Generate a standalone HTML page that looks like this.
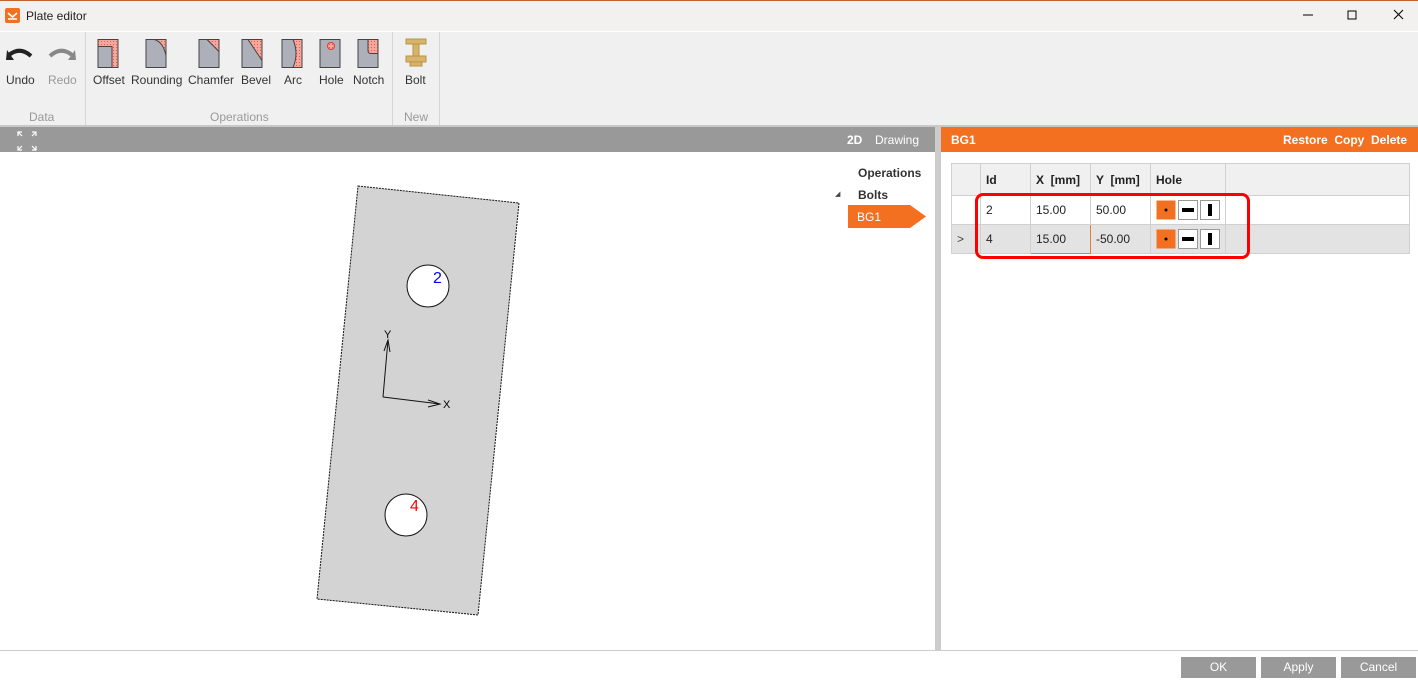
<!DOCTYPE html>
<html><head><style>
*{margin:0;padding:0;box-sizing:border-box}
body{width:1418px;height:680px;position:relative;overflow:hidden;font-family:"Liberation Sans",sans-serif;font-size:12px;background:#fff;color:#222}
.abs{position:absolute}
.tb{position:absolute;top:34px;text-align:center;font-size:12px;color:#333}
.btn{position:absolute;top:657px;height:21px;background:#999;color:#fff;text-align:center;line-height:21px;font-size:12px}
td{border:1px solid #d0d0d0;padding:0 5px;height:29px;font-size:12px}
</style></head><body>
<div class="abs" style="left:0;top:0;width:1418px;height:31px;background:#f3f1ef;border-top:1px solid #c0612e"></div>
<div class="abs" style="left:5px;top:8px;width:15px;height:15px;background:#f37021;border-radius:2px"></div>
<svg class="abs" style="left:5px;top:8px" width="15" height="15"><path d="M3 5 L7.5 9 L12 5 M3 11 H12" stroke="#fff" stroke-width="1.6" fill="none"/></svg>
<div class="abs" style="left:26px;top:9px;font-size:12px">Plate editor</div>
<svg class="abs" style="left:1290px;top:8px" width="120" height="16"><path d="M13 7h10" stroke="#000"/><path d="M58 3h8v8h-8z" stroke="#000" fill="none"/><path d="M104 2l9 9M113 2l-9 9" stroke="#000"/></svg>
<div class="abs" style="left:0;top:32px;width:1418px;height:94px;background:#f0f0f0"></div>
<div class="abs" style="left:85px;top:32px;width:1px;height:94px;background:#d5d5d5"></div>
<div class="abs" style="left:392px;top:32px;width:1px;height:94px;background:#d5d5d5"></div>
<div class="abs" style="left:439px;top:32px;width:1px;height:94px;background:#d5d5d5"></div>
<svg class="abs" style="left:6px;top:46px" width="70" height="18"><path d="M3 9 Q14 0 25 10" stroke="#222" stroke-width="4" fill="none"/><path d="M1 4 L8 14 L0 14Z" fill="#222"/><path d="M44 10 Q55 0 66 9" stroke="#888" stroke-width="4" fill="none"/><path d="M69 4 L62 14 L70 14Z" fill="#888"/></svg>
<div class="tb" style="left:6px;top:73px">Undo</div>
<div class="tb" style="left:48px;top:73px;color:#999">Redo</div>
<div class="tb" style="left:29px;top:110px;color:#999">Data</div>
<svg class="abs" style="left:95px;top:38px" width="290" height="32">
<defs><pattern id="h" width="3" height="3" patternUnits="userSpaceOnUse"><rect width="3" height="3" fill="#f6a69a"/><rect width="1" height="1" fill="#e55"/></pattern></defs>
<g stroke="#444" stroke-width="1"><rect x="3" y="1.5" width="20" height="28" fill="#adb0b8"/><path d="M3 1.5h20v28h-6v-21h-14z" fill="url(#h)"/>
<rect x="51" y="1.5" width="20" height="28" fill="#adb0b8"/><path d="M59 1.5h12v16q-3-14-12-16z" fill="url(#h)"/>
<rect x="104" y="1.5" width="20" height="28" fill="#adb0b8"/><path d="M112 1.5h12v12z" fill="url(#h)"/>
<rect x="147" y="1.5" width="20" height="28" fill="#adb0b8"/><path d="M153 1.5h14v21z" fill="url(#h)"/>
<rect x="187" y="1.5" width="20" height="28" fill="#adb0b8"/><path d="M198 1.5h9v28h-9q6-14 0-28z" fill="url(#h)"/>
<rect x="225" y="1.5" width="20" height="28" fill="#adb0b8"/><circle cx="236" cy="8" r="3.5" fill="url(#h)" stroke="#e33"/>
<rect x="263" y="1.5" width="20" height="28" fill="#adb0b8"/><path d="M273 1.5h10v14h-7q-3 0-3-3z" fill="url(#h)"/></g></svg>
<div class="tb" style="left:93px;top:73px">Offset</div>
<div class="tb" style="left:131px;top:73px">Rounding</div>
<div class="tb" style="left:188px;top:73px">Chamfer</div>
<div class="tb" style="left:241px;top:73px">Bevel</div>
<div class="tb" style="left:284px;top:73px">Arc</div>
<div class="tb" style="left:319px;top:73px">Hole</div>
<div class="tb" style="left:353px;top:73px">Notch</div>
<div class="tb" style="left:210px;top:110px;color:#999">Operations</div>
<svg class="abs" style="left:405px;top:38px" width="22" height="33"><g fill="#d8b36a" stroke="#b8934a"><rect x="1" y="1" width="20" height="5"/><rect x="8" y="6" width="6" height="19"/><rect x="1" y="18" width="20" height="6"/><rect x="5" y="24" width="12" height="4"/></g></svg>
<div class="tb" style="left:405px;top:73px">Bolt</div>
<div class="tb" style="left:404px;top:110px;color:#999">New</div>
<div class="abs" style="left:0;top:125px;width:1418px;height:2px;background:#c8c8c8"></div>
<div class="abs" style="left:0;top:127px;width:935px;height:25px;background:#999"></div>
<svg class="abs" style="left:17px;top:131px" width="20" height="20"><g stroke="#fff" stroke-width="1.2" fill="none"><path d="M1 5V1h4M1 1l4 4M19 5V1h-4M19 1l-4 4M1 15v4h4M1 19l4-4M19 15v4h-4M19 19l-4-4"/></g></svg>
<div class="abs" style="left:847px;top:133px;color:#fff;font-weight:bold">2D</div>
<div class="abs" style="left:875px;top:133px;color:#fff">Drawing</div>
<div class="abs" style="left:935px;top:127px;width:6px;height:523px;background:#ccc"></div>
<div class="abs" style="left:941px;top:127px;width:477px;height:25px;background:#f37021"></div>
<div class="abs" style="left:951px;top:133px;color:#fff;font-weight:bold">BG1</div>
<div class="abs" style="left:1283px;top:133px;color:#fff;font-weight:bold">Restore&nbsp;&nbsp;Copy&nbsp;&nbsp;Delete</div>
<div class="abs" style="left:858px;top:166px;font-weight:bold;color:#333">Operations</div>
<div class="abs" style="left:835px;top:190px;font-size:7px;color:#444">◢</div>
<div class="abs" style="left:858px;top:188px;font-weight:bold;color:#333">Bolts</div>
<svg class="abs" style="left:848px;top:205px" width="78" height="23"><path d="M0 0h62l16 11.5l-16 11.5h-62z" fill="#f37021"/></svg>
<div class="abs" style="left:857px;top:210px;color:#fff">BG1</div>
<svg class="abs" style="left:0;top:152px" width="935" height="498">
<path d="M358 34L519 51L478 463L317 447Z" fill="#d3d3d3" stroke="#111" stroke-dasharray="2 1"/>
<circle cx="428" cy="134" r="21" fill="#fff" stroke="#111"/><circle cx="406" cy="363" r="21" fill="#fff" stroke="#111"/>
<text x="433" y="131" fill="#00f" font-size="16" font-family="Liberation Sans">2</text>
<text x="410" y="359" fill="#f00" font-size="16" font-family="Liberation Sans">4</text>
<path d="M383 245L388 188M383 245L440 252" stroke="#111"/><path d="M384 199L388 188L390 200M428 248L440 252L428 255" stroke="#111" fill="none"/>
<text x="384" y="186" font-size="11" font-family="Liberation Sans">Y</text><text x="443" y="256" font-size="11" font-family="Liberation Sans">X</text>
</svg>
<table class="abs" style="left:951px;top:163px;width:459px;border-collapse:collapse">
<tr style="background:#f0f0f0;font-weight:bold"><td style="width:29px;height:32px"></td><td style="width:50px;font-weight:bold">Id</td><td style="width:60px;font-weight:bold">X &nbsp;[mm]</td><td style="width:60px;font-weight:bold">Y &nbsp;[mm]</td><td style="width:75px;font-weight:bold">Hole</td><td></td></tr>
<tr><td></td><td>2</td><td>15.00</td><td>50.00</td><td></td><td></td></tr>
<tr style="background:#e3e3e3"><td style="color:#444">&gt;</td><td>4</td><td style="border:1px solid #e08040">15.00</td><td>-50.00</td><td></td><td></td></tr>
</table>
<div class="abs" style="left:975px;top:193px;width:275px;height:66px;border:3px solid #f00;border-radius:8px"></div>
<svg class="abs" style="left:1155px;top:199px" width="66" height="52"><g stroke="#999" fill="#fff"><rect x="1.5" y="1.5" width="19" height="19" fill="#f37021" stroke="none"/><rect x="23.5" y="1.5" width="19" height="19"/><rect x="45.5" y="1.5" width="19" height="19"/>
<rect x="1.5" y="30.5" width="19" height="19" fill="#f37021" stroke="none"/><rect x="23.5" y="30.5" width="19" height="19"/><rect x="45.5" y="30.5" width="19" height="19"/></g>
<g fill="#000"><circle cx="11" cy="11" r="1.5"/><rect x="27" y="9" width="12" height="4"/><rect x="53" y="5" width="4" height="12"/><circle cx="11" cy="40" r="1.5"/><rect x="27" y="38" width="12" height="4"/><rect x="53" y="34" width="4" height="12"/></g></svg>
<div class="abs" style="left:0;top:650px;width:1418px;height:1px;background:#ccc"></div>
<div class="btn" style="left:1181px;width:75px">OK</div>
<div class="btn" style="left:1261px;width:75px">Apply</div>
<div class="btn" style="left:1341px;width:75px">Cancel</div>
</body></html>
